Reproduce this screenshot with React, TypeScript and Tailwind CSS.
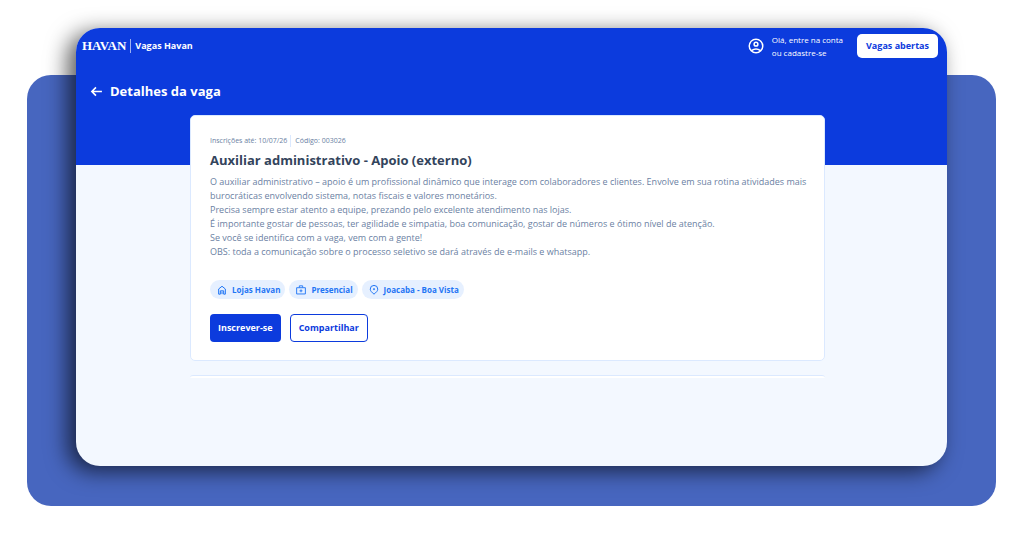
import type { ReactNode } from "react";

const paragraphs = [
  "O auxiliar administrativo – apoio é um profissional dinâmico que interage com colaboradores e clientes. Envolve em sua rotina atividades mais burocráticas envolvendo sistema, notas fiscais e valores monetários.",
  "Precisa sempre estar atento a equipe, prezando pelo excelente atendimento nas lojas.",
  "É importante gostar de pessoas, ter agilidade e simpatia, boa comunicação, gostar de números e ótimo nível de atenção.",
  "Se você se identifica com a vaga, vem com a gente!",
  "OBS: toda a comunicação sobre o processo seletivo se dará através de e-mails e whatsapp.",
];

function HomeIcon() {
  return (
    <svg viewBox="0 0 24 24" className="size-[10px]" fill="none" stroke="currentColor" strokeWidth="2.4" aria-hidden="true">
      <path d="M4 22V9.500L12 3l8 6.500V22h-4v-8H8v8z" />
      <path d="M12 16v6" />
    </svg>
  );
}

function BriefcaseIcon() {
  return (
    <svg viewBox="0 0 24 24" className="size-[10px]" fill="none" stroke="currentColor" strokeWidth="2.2" aria-hidden="true">
      <path d="M1.500 6.500h21v15h-21zM8 6V2h8v4M12 10.500v7M8.500 14h7" />
    </svg>
  );
}

function PinIcon() {
  return (
    <svg viewBox="0 0 24 24" className="size-[10px]" fill="none" stroke="currentColor" strokeWidth="2.4" aria-hidden="true">
      <path d="M12 22c-5.500-4.500-9-8-9-12a9 9 0 0 1 18 0c0 4-3.500 7.500-9 12z" />
      <circle cx="12" cy="10" r="1.500" />
    </svg>
  );
}

function Tag({ icon, children }: { icon: ReactNode; children: ReactNode }) {
  return (
    <li className="flex h-[19px] items-center gap-[5px] rounded-full bg-[#e6f0ff] pr-[5px] pl-[7px] text-[8px] font-bold text-[#1f75f5]">
      {icon}
      {children}
    </li>
  );
}

export default function App() {
  return (
    <div className="bg-white pt-[75px] pr-[28px] pb-[30px] pl-[27px] font-['Open_Sans','Noto_Sans',sans-serif]">
      <div className="flow-root rounded-3xl bg-[#4766bf] px-[49px] pb-10">
        <div className="-mt-[47px] min-h-[438px] overflow-hidden rounded-3xl bg-[#f3f8ff] shadow-[-8px_5px_22px_rgba(0,0,0,0.65)]">
          {/* Header */}
          <header className="h-[137px] bg-[#0c3bdd] text-white">
            <div className="flex items-center pt-[5px] pr-[9px] pl-[6px]">
              <a href="#" className="flex items-center">
                <span className="border-r border-white/60 pr-1 font-['Liberation_Serif',serif] text-[13px] leading-[14px] font-bold">HAVAN</span>
                <span className="pl-1 text-[9px] font-bold">Vagas Havan</span>
              </a>
              <a href="#" className="ml-auto flex items-center gap-[7px] text-[8px] leading-[13px] font-medium">
                <svg viewBox="0 0 24 24" className="size-[18px]" fill="currentColor" aria-hidden="true">
                  <path d="M12 2a10 10 0 1 0 0 20 10 10 0 0 0 0-20zM7.350 18.500C8.660 17.560 10.260 17 12 17s3.340.560 4.650 1.500A8 8 0 0 1 12 20a8 8 0 0 1-4.650-1.500zm10.790-1.380A9.950 9.950 0 0 0 12 15a9.950 9.950 0 0 0-6.140 2.120A8 8 0 1 1 20 12a8 8 0 0 1-1.860 5.120zM12 6a3.500 3.500 0 1 0 0 7 3.500 3.500 0 0 0 0-7zm0 5a1.500 1.500 0 1 1 0-3 1.500 1.500 0 0 1 0 3z" />
                </svg>
                <span>
                  Olá, entre na conta
                  <br />
                  ou cadastre-se
                </span>
              </a>
              <button className="ml-[14px] h-6 rounded-[5px] bg-white px-[9px] text-[9px] font-bold text-[#0c3bdd]">Vagas abertas</button>
            </div>
            <div className="flex items-center gap-[7px] pt-[22px] pl-[14px]">
              <button aria-label="Voltar">
                <svg viewBox="0 0 24 24" className="size-[13px]" fill="none" stroke="currentColor" strokeWidth="3" aria-hidden="true">
                  <path d="M22 12H4M11 4.500 3.500 12l7.500 7.500" />
                </svg>
              </button>
              <h1 className="text-[13px] leading-5 font-bold">Detalhes da vaga</h1>
            </div>
          </header>

          <main className="-mt-[50px] pr-[122px] pl-[114px]">
            <article className="rounded-[5px] border border-[#dbe9ff] bg-white pt-[19px] pr-3 pb-[18px] pl-[19px]">
              <div className="flex text-[7px] leading-3 text-[#6b7fa3]">
                <span className="border-r border-[#dbe9ff] pr-[3px]">Inscrições até: 10/07/26</span>
                <span className="pl-1">Código: 003026</span>
              </div>
              <h2 className="mt-[3px] text-[13px] leading-5 font-bold text-[#33445c]">Auxiliar administrativo - Apoio (externo)</h2>
              <div className="mt-[5px] text-[9px] leading-[14px] text-[#6b7fa3]">
                {paragraphs.map((text) => (
                  <p key={text}>{text}</p>
                ))}
              </div>
              <ul className="mt-[21px] flex gap-1">
                <Tag icon={<HomeIcon />}>Lojas Havan</Tag>
                <Tag icon={<BriefcaseIcon />}>Presencial</Tag>
                <Tag icon={<PinIcon />}>Joacaba - Boa Vista</Tag>
              </ul>
              <div className="mt-[15px] flex gap-[9px] text-[9px] font-bold">
                <button className="h-7 rounded bg-[#0c3bdd] px-2 text-white">Inscrever-se</button>
                <button className="h-7 rounded border border-[#0c3bdd] bg-white px-2 text-[#0c3bdd]">Compartilhar</button>
              </div>
            </article>
            <div className="mt-[14px] h-[3px] rounded-t border-t border-[#dbe9ff] bg-white" />
          </main>
        </div>
      </div>
    </div>
  );
}
